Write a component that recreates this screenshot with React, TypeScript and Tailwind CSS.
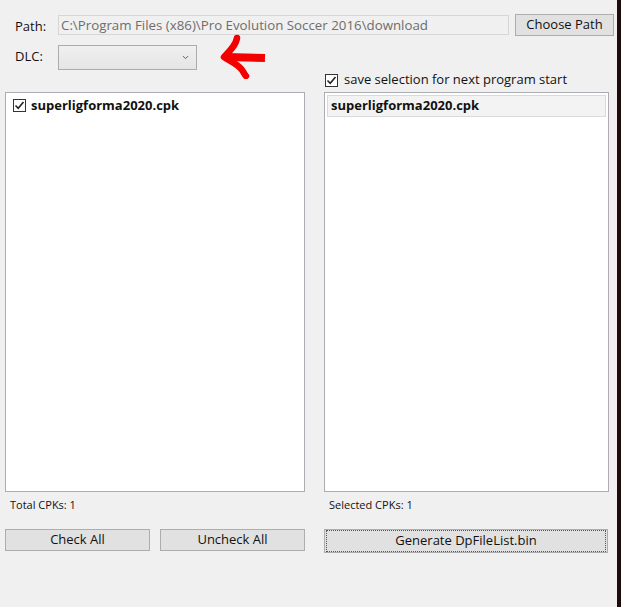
import { ChevronDown } from 'lucide-react';

function CheckMark() {
  return (
    <span className="inline-flex w-[13px] h-[13px] border border-[#333] bg-white items-center justify-center shrink-0">
      <svg width="11" height="11" viewBox="0 0 11 11">
        <path d="M1.5 5.5 L4.2 8.2 L9.5 2" fill="none" stroke="#222" strokeWidth="1.6" />
      </svg>
    </span>
  );
}

function WinButton({ label, className = '', focused = false }: { label: string; className?: string; focused?: boolean }) {
  return (
    <div className={`bg-[#e1e1e1] border border-[#adadad] flex items-center justify-center text-[13px] text-[#111] ${className}`}>
      {focused ? (
        <div className="m-[1px] w-full h-full border border-dotted border-[#555] flex items-center justify-center">{label}</div>
      ) : (
        label
      )}
    </div>
  );
}

export default function App() {
  return (
    <div className="flex w-[621px] h-[607px] bg-[#f0f0f0]" style={{ fontFamily: '"Open Sans", "Noto Sans", sans-serif' }}>
      <div className="relative w-[617px] h-full">
        {/* Path row */}
        <div className="flex items-center pt-[13px] pl-[15px]">
          <span className="w-[43px] text-[13px] text-[#111] pt-[4px]">Path:</span>
          <div className="w-[451px] h-[20px] border border-[#d6d6d6] bg-[#f0f0f0] text-[13.3px] text-[#6d6d6d] pl-[2px] leading-[18px] whitespace-nowrap overflow-hidden">
            C:\Program Files (x86)\Pro Evolution Soccer 2016\download
          </div>
          <WinButton label="Choose Path" className="ml-[6px] w-[99px] h-[22px]" />
        </div>

        {/* DLC row */}
        <div className="flex items-center pt-[8px] pl-[15px]">
          <span className="w-[43px] text-[13px] text-[#111]">DLC:</span>
          <div className="w-[139px] h-[25px] border border-[#acacac] bg-gradient-to-b from-[#f0f0f0] to-[#e5e5e5] flex items-center justify-end pr-[6px]">
            <ChevronDown size={9} strokeWidth={2.5} className="text-[#555]" />
          </div>
        </div>

        {/* red arrow marker */}
        <svg className="absolute left-[218px] top-[33px]" width="52" height="46" viewBox="0 0 52 46">
          <path d="M19 5 C18 12 12 18 6 24 C12 28 20 31 24 37 C26 40 27 42 28 43" fill="none" stroke="#f40000" strokeWidth="6.5" strokeLinecap="round" strokeLinejoin="round" />
          <path d="M8 24 L47 25" fill="none" stroke="#f40000" strokeWidth="8" strokeLinecap="butt" />
        </svg>

        {/* save selection checkbox */}
        <div className="flex items-center gap-[6px] pl-[325px] pt-[1px] h-[20px]">
          <CheckMark />
          <span className="text-[13px] text-[#111]">save selection for next program start</span>
        </div>

        {/* lists */}
        <div className="flex pl-[5px] pt-[2px]">
          <div className="w-[300px] h-[400px] border border-[#abadb3] bg-white pt-[3px] pl-[7px]">
            <div className="flex items-center gap-[5px]">
              <CheckMark />
              <span className="text-[13px] font-bold text-[#111]">superligforma2020.cpk</span>
            </div>
          </div>
          <div className="ml-[19px] w-[285px] h-[400px] border border-[#abadb3] bg-white p-[2px]">
            <div className="h-[22px] bg-[#f3f3f3] border border-[#dadada] pl-[3px] flex items-center text-[13px] font-bold text-[#111]">
              superligforma2020.cpk
            </div>
          </div>
        </div>

        {/* counters */}
        <div className="flex pt-[5px] text-[11px] text-[#111]">
          <span className="pl-[10px] w-[329px]">Total CPKs: 1</span>
          <span>Selected CPKs: 1</span>
        </div>

        {/* buttons */}
        <div className="flex pl-[5px] pt-[16px]">
          <WinButton label="Check All" className="w-[145px] h-[22px]" />
          <WinButton label="Uncheck All" className="ml-[10px] w-[145px] h-[22px]" />
          <WinButton label="Generate DpFileList.bin" className="ml-[19px] w-[284px] h-[24px]" focused />
        </div>
      </div>
      <div className="w-[4px] h-full bg-[#1c0d0a]" />
    </div>
  );
}
